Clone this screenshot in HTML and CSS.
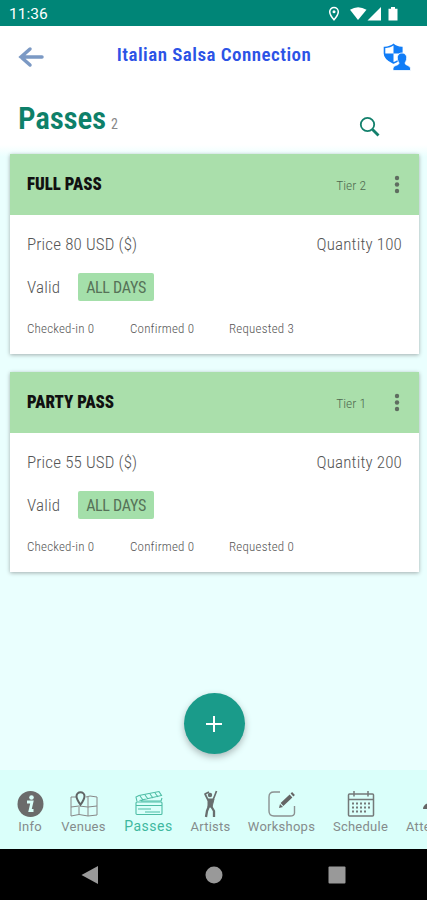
FILE: index.html
```html
<!DOCTYPE html>
<html lang="en">
<head>
<meta charset="utf-8">
<title>Passes</title>
<link rel="stylesheet" href="styles.css">
</head>
<body>
<div class="app">
  <div class="status">
    <span class="clock">11:36</span>
    <svg class="status-icons" width="74" height="16" viewBox="0 0 74 16">
      <path d="M8 1.500a4.300 4.300 0 0 0-4.300 4.300C3.700 9 8 13.800 8 13.800s4.300-4.800 4.300-8A4.300 4.300 0 0 0 8 1.500z" fill="none" stroke="#fff" stroke-width="1.500"/>
      <circle cx="8" cy="5.800" r="1.500" fill="#fff"/>
      <path d="M24 3.800q8-5 16.500 0L32 14z" fill="#fff"/>
      <path d="M41.500 14.500H55V1z" fill="#fff"/>
      <path d="M62.500 2.800h2.500V1h4v1.800h2.500v11.700h-9z" fill="#fff"/>
    </svg>
  </div>
  <header class="bar">
    <svg width="28" height="24" viewBox="0 0 28 24"><path d="M25 12H4M13 4l-9 8 9 8" fill="none" stroke="#7b99c4" stroke-width="3.500" stroke-linecap="round"/></svg>
    <h1 class="event">Italian Salsa Connection</h1>
    <svg width="28" height="28" viewBox="0 0 28 28">
      <path d="M10.500 1.500Q13 4 18.800 4.500v6c0 4-3 7.500-8.300 9.500C5 17.500 1.500 14.500 1.500 10.500v-6Q7.500 4 10.500 1.500z" fill="#fff" stroke="#117df7" stroke-width="1.600"/>
      <path d="M10.500 1.500Q13 4 18.800 4.500v6h-8.300zM10.500 10.500V20C5 17.500 1.500 14.500 1.500 10.500z" fill="#117df7"/>
      <path d="M10 27.500V25c1-3 6-2.500 6-5-3-4.500-2-10 3-10s6 5.500 3 10c0 2.500 4.500 2 5.500 5v2.500z" fill="#117df7" stroke="#fff" stroke-width=".8"/>
    </svg>
  </header>
  <div class="heading">
    <h2 class="title">Passes</h2><span class="count">2</span>
    <svg class="search" width="22" height="22" viewBox="0 0 22 22"><circle cx="8.500" cy="8.500" r="6.700" fill="none" stroke="#13806c" stroke-width="1.800"/><path d="M13.500 13.500l6 6" stroke="#13806c" stroke-width="2.800"/></svg>
  </div>
  <main class="content">
    <article class="card">
      <div class="card-head"><h3 class="name">FULL PASS</h3><span class="tier">Tier 2</span><svg class="more" width="6" height="20" viewBox="0 0 6 20"><circle cx="3" cy="3" r="2.200"/><circle cx="3" cy="9.500" r="2.200"/><circle cx="3" cy="16" r="2.200"/></svg></div>
      <div class="row price"><span>Price 80 USD ($)</span><span>Quantity 100</span></div>
      <div class="row valid"><span class="label">Valid</span><span class="chip">ALL DAYS</span></div>
      <div class="stats"><span>Checked-in 0</span><span>Confirmed 0</span><span>Requested 3</span></div>
    </article>
    <article class="card">
      <div class="card-head"><h3 class="name">PARTY PASS</h3><span class="tier">Tier 1</span><svg class="more" width="6" height="20" viewBox="0 0 6 20"><circle cx="3" cy="3" r="2.200"/><circle cx="3" cy="9.500" r="2.200"/><circle cx="3" cy="16" r="2.200"/></svg></div>
      <div class="row price"><span>Price 55 USD ($)</span><span>Quantity 200</span></div>
      <div class="row valid"><span class="label">Valid</span><span class="chip">ALL DAYS</span></div>
      <div class="stats"><span>Checked-in 0</span><span>Confirmed 0</span><span>Requested 0</span></div>
    </article>
    <button class="fab" aria-label="Add pass"><svg width="16" height="16" viewBox="0 0 16 16"><path d="M8 0v16M0 8h16" stroke="#fff" stroke-width="2"/></svg></button>
  </main>
  <nav class="tabs">
    <div class="tab info"><svg width="28" height="28" viewBox="0 0 28 28"><circle cx="14.500" cy="14" r="13" fill="#6b6b6b"/><circle cx="15.500" cy="7.500" r="2.300" fill="#dafffa"/><path d="M11 12h5l-2 8.500h3.500" fill="none" stroke="#dafffa" stroke-width="2.800"/></svg><span>Info</span></div>
    <div class="tab venues"><svg width="28" height="28" viewBox="0 0 28 28" fill="none" stroke="#888" stroke-width="1"><path d="M6 7H1v19l8-1.500 9 1.500 9-1V7l-7-1-4 1M1 17l8-1 9 1 9-1M9 17v8M18 7v19"/><path d="M10.500 2.200a4 4 0 0 0-4 4c0 3 4 8.500 4 8.500s4-5.500 4-8.500a4 4 0 0 0-4-4z" stroke="#606565" stroke-width="2"/></svg><span>Venues</span></div>
    <div class="tab passes"><svg width="28" height="28" viewBox="0 0 28 28" fill="none" stroke="#4dbda5" stroke-width="1.100"><rect x="1" y="12" width="26" height="12.500" rx="1"/><path d="M1 15.500h26M3 19h13M10 22h15M2 11.500L1 7l3-1.500L24 1.500l2.500 4-22 5M5 6l3 4M10 5l3 4M15 4l3 4M20 3l3 4M6 11h20l1-3"/></svg><span>Passes</span></div>
    <div class="tab artists"><svg width="28" height="28" viewBox="0 0 28 28" fill="none" stroke="#686e6e" stroke-width="2" stroke-linejoin="round"><circle cx="13" cy="5" r="2.200" fill="#686e6e" stroke="none"/><path d="M12 2L8 4l3 6h5l2-5 1.500-4" stroke-width="1.700"/><path d="M11 9h6l-2 8h-4z" fill="#686e6e" stroke-width="1"/><path d="M12 16l-2 5-1 6M14 16l3 5v6" stroke-width="2.300"/></svg><span>Artists</span></div>
    <div class="tab workshops"><svg width="28" height="28" viewBox="0 0 28 28" fill="none"><path d="M12 2H6Q1 2 1 7v14q0 5 5 5h16q4.500 0 4.500-3v-7" stroke="#8b9191" stroke-width="1.400"/><path d="M14 14.500L23 6M24 5l1.500-1.500" stroke="#656565" stroke-width="4"/><path d="M11 18l1-4 3 3z" fill="#656565"/></svg><span>Workshops</span></div>
    <div class="tab schedule"><svg width="28" height="28" viewBox="0 0 28 28" fill="none" stroke="#747979" stroke-width="1.500"><rect x="1.500" y="4" width="25" height="22" rx="1"/><path d="M1.500 9.500h25M7 1v5.500M21 1v5.500"/><path d="M5 13.500h19M5 17.500h19M5 21.500h15" stroke-width="1.800" stroke-dasharray="2 2"/></svg><span>Schedule</span></div>
    <div class="tab attendees"><svg width="28" height="28" viewBox="0 0 28 28"><path d="M0 19q0-4 5-6V4h12v15z" fill="#656565"/></svg><span>Attendees</span></div>
  </nav>
  <div class="system">
    <svg width="18" height="20" viewBox="0 0 18 20"><path d="M.5 10L17 1v18z" fill="#999"/></svg>
    <svg width="18" height="20" viewBox="0 0 18 20"><circle cx="9" cy="10" r="8.500" fill="#999"/></svg>
    <svg width="18" height="20" viewBox="0 0 18 20"><rect x=".5" y="1.500" width="17" height="17" rx="1" fill="#999"/></svg>
  </div>
</div>
</body>
</html>
```
FILE: styles.css
```css
* { box-sizing: border-box; }
body { margin: 0; font-family: "Roboto Condensed", Roboto, sans-serif; color: #555; }
h1, h2, h3 { margin: 0; }
svg { display: block; flex: none; }
.app { width: 427px; height: 900px; overflow: hidden; display: flex; flex-direction: column; background: #fff; }
.status { height: 26px; flex: none; background: #008577; display: flex; align-items: center; padding: 2px 27px 0 9px; justify-content: space-between; }
.clock { color: #fff; font-family: Roboto, sans-serif; font-size: 15.500px; }
.bar { height: 59px; flex: none; display: flex; align-items: center; justify-content: space-between; padding: 2px 16px 0 17px; }
.event { font-size: 19px; font-weight: 600; color: #2c53e6; letter-spacing: .45px; padding-bottom: 5px; }
.heading { height: 60px; flex: none; display: flex; align-items: baseline; padding: 15px 46px 0 18px; }
.title { font-size: 31px; font-weight: 600; color: #0e8069; letter-spacing: -.2px; }
.count { font-size: 14px; margin-left: 5px; color: #888; }
.search { margin-left: auto; align-self: flex-start; margin-top: 16px; }
.content { flex: 1; background: linear-gradient(#fff, #eafffe 12px); padding: 9px 8px 0 10px; display: flex; flex-direction: column; gap: 18px; }
.card { height: 200px; background: #fff; box-shadow: 0 1px 4px #a0adad; }
.card-head { height: 61px; background: #aadfab; padding: 0 19px 0 17px; display: flex; align-items: center; }
.name { font-size: 18.500px; font-weight: 900; color: #111; transform: scaleX(.91); transform-origin: left; padding-bottom: 1px; }
.tier { margin-left: auto; margin-right: 28px; font-size: 13.500px; font-weight: 300; color: #4f6a50; }
.more { fill: #5f6d60; }
.row { display: flex; align-items: center; padding: 0 17px; font-size: 17px; font-weight: 300; }
.price { justify-content: space-between; height: 58px; letter-spacing: .15px; }
.valid { height: 28px; }
.label { width: 51px; letter-spacing: .2px; }
.chip { height: 28px; line-height: 29px; width: 76px; text-align: center; background: #a4dfaa; border-radius: 2px; font-size: 16px; font-weight: 400; letter-spacing: -.3px; color: #567258; }
.stats { display: grid; grid-template-columns: 103px 99px 1fr; padding: 20px 17px 0; font-size: 13px; font-weight: 300; letter-spacing: .2px; }
.fab { border: 0; width: 61px; height: 61px; border-radius: 50%; background: #1a9b8a; align-self: center; margin-top: auto; margin-bottom: 16px; margin-right: 1px; padding: 0; display: flex; align-items: center; justify-content: center; flex: none; box-shadow: 0 3px 7px #aab9b9; }
.tabs { height: 79px; flex: none; background: #dafffa; display: flex; padding-top: 20px; overflow: hidden; font-family: Roboto, sans-serif; font-size: 13px; letter-spacing: .25px; }
.tab { display: flex; flex-direction: column; align-items: center; flex: none; color: #858c8c; gap: 1px; }
.info { width: 60px; }
.venues { width: 47px; }
.passes { width: 83px; color: #3fb89f; font-size: 14px; letter-spacing: .5px; }
.passes span { line-height: 15px; }
.artists { width: 41px; }
.workshops { width: 101px; }
.schedule { width: 57px; }
.attendees { margin-left: 17px; }
.system { height: 51px; flex: none; background: #000; display: flex; justify-content: space-between; align-items: center; padding: 0 81px; }
```
